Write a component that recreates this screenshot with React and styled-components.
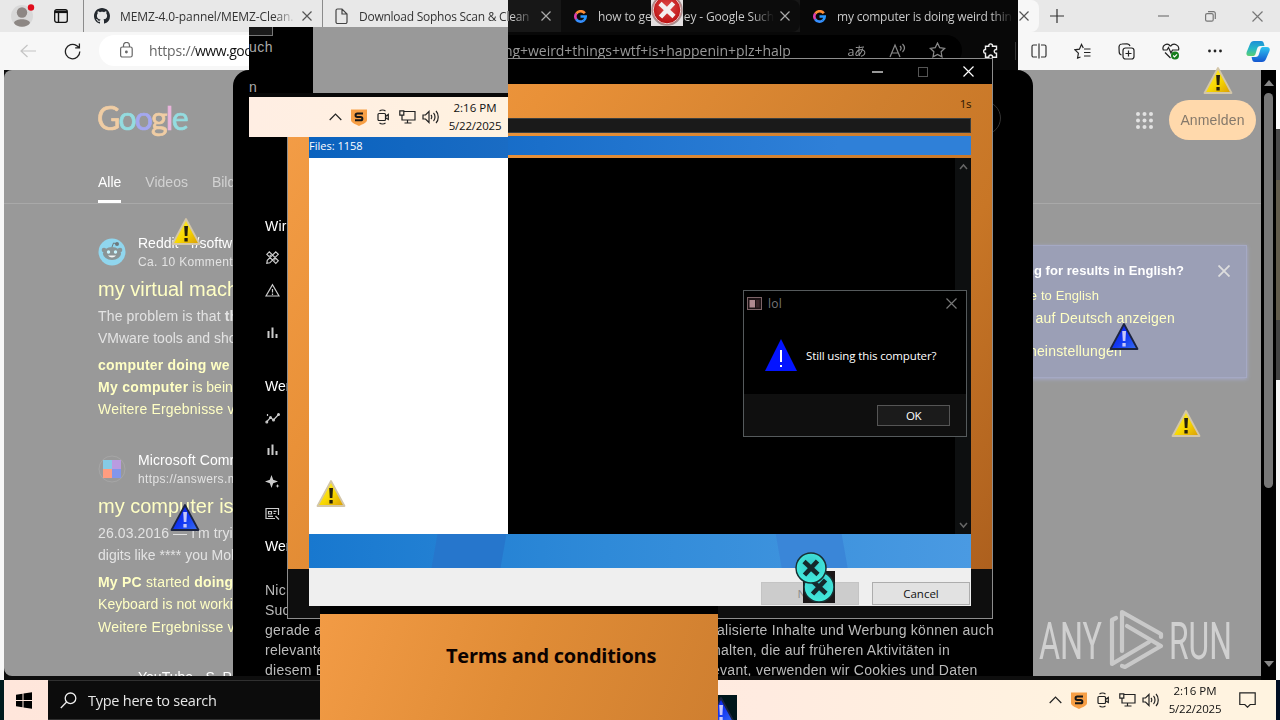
import React from 'react';
import styled, { createGlobalStyle } from 'styled-components';

const Global = createGlobalStyle`
  * { box-sizing: border-box; }
  html, body { margin: 0; padding: 0; background: #000; }
  svg { display: block; flex: none; }
`;

const ui = `"Open Sans", "Noto Sans", "Noto Sans CJK JP", sans-serif`;
const web = `"Liberation Sans", Arial, sans-serif`;

const Desktop = styled.div`
  position: relative;
  width: 1280px;
  height: 720px;
  overflow: hidden;
  background: #f7f7f7;
  font-family: ${ui};
  display: flex;
  flex-direction: column;
`;

/* Anything that floats freely over the desktop */
const Floating = styled.div`
  position: absolute;
  left: ${p => p.$x}px;
  top: ${p => p.$y}px;
  width: ${p => p.$w}px;
  height: ${p => p.$h}px;
`;

const Text = styled.span`
  white-space: pre;
  flex: none;
  font-family: ${p => (p.$web ? web : ui)};
  font-size: ${p => p.$size || 12}px;
  letter-spacing: ${p => p.$ls || 0}px;
  color: ${p => p.$color || '#333'};
  font-weight: ${p => p.$weight || 400};
`;

/* ---------- browser chrome ---------- */
const TabStrip = styled.div`
  display: flex;
  height: 32px;
  flex: none;
  background: #e8e8e8;
`;
const ProfileArea = styled.div`
  width: 83px;
  display: flex;
  align-items: center;
  padding-left: 11px;
  gap: 19px;
`;
const Tab = styled.div`
  width: 239px;
  display: flex;
  align-items: center;
  padding-left: 10px;
  border-left: 1px solid ${p => (p.$tone ? 'transparent' : '#8b8b8b')};
  background: ${p => p.$tone || 'transparent'};
  border-radius: ${p => (p.$tone ? '0 8px 8px 0' : 0)};
`;
const Favicon = styled.div`
  width: 16px;
  display: flex;
  justify-content: center;
`;
const TabTitle = styled.div`
  width: 192px;
  padding-left: 10px;
  overflow: hidden;
  display: flex;
  mask-image: linear-gradient(90deg, #000 164px, transparent 186px);
`;
const WindowButtons = styled.div`
  margin-left: auto;
  display: flex;
  align-items: center;
  gap: 36px;
  padding-right: 17px;
`;
const PlusSlot = styled.div`
  width: 36px;
  display: flex;
  align-items: center;
  justify-content: center;
`;

const Toolbar = styled.div`
  height: 38px;
  flex: none;
  display: flex;
  align-items: center;
  padding-left: 18px;
  background: #f7f7f7;
`;
const AddressBar = styled.div`
  width: 863px;
  height: 31px;
  margin: 0 0 2px 18px;
  border-radius: 16px;
  background: #fff;
  display: flex;
  align-items: center;
  padding-left: 21px;
`;
const Scheme = styled.div`
  display: flex;
  width: 62px;
  padding-left: 16px;
  overflow: visible;
`;
const Host = styled.div`
  width: 309px;
  display: flex;
`;
const AddressActions = styled.div`
  margin-left: auto;
  display: flex;
  align-items: center;
  gap: 23px;
  padding-right: 16px;
`;
const ToolButtons = styled.div`
  margin-left: 21px;
  display: flex;
  align-items: center;
  gap: 27px;
  & > svg:last-child { margin-left: -4px; }
`;
const SplitGroup = styled.div`
  display: flex;
  align-items: center;
  gap: 15px;
  margin-left: -11px;
`;
const ToolGap = styled.div`
  width: 0;
  height: 18px;
  border-left: 1px solid #ccc;
`;

/* ---------- page ---------- */
const PageRow = styled.div`
  height: 610px;
  flex: none;
  display: flex;
  background: #0e0e0e;
  border-left: 4px solid #f7f7f7;
`;
const Page = styled.div`
  width: 1257px;
  height: 606px;
  background: #999;
  border-radius: 8px 0 0 8px;
  overflow: hidden;
  font-family: ${web};
`;
const ScrollTrack = styled.div`
  width: 15px;
  background: #000;
  display: flex;
  flex-direction: column;
  align-items: center;
  justify-content: space-between;
  padding: 10px 0 13px;
`;
const Thumb = styled.div`
  width: 9px;
  height: 395px;
  margin: 7px 0 auto;
  border-radius: 5px;
  background: #777;
`;
const EdgeStrip = styled.div`
  width: 4px;
  background: linear-gradient(#fff 0 59px, #4c4c4c 59px 110px, #625c4c 110px 250px, #444 250px 310px, #f7f7f7 310px);
`;
const PageHeader = styled.div`
  height: 96px;
  display: flex;
  align-items: center;
  padding: 4px 5px 0 93px;
`;
const Logo = styled.div`
  font-family: Lato, sans-serif;
  font-size: 32px;
  line-height: 34px;
  margin-bottom: 5px;
  letter-spacing: -1.8px;
  font-weight: 400;
  -webkit-text-stroke: 0.7px;
`;
const Hue = styled.span`color: ${p => p.$c};`;
const HeaderRight = styled.div`
  margin-left: auto;
  display: flex;
  align-items: center;
  gap: 16px;
`;
const SignIn = styled.div`
  width: 87px;
  height: 40px;
  border-radius: 20px;
  background: #ffd9ac;
  display: flex;
  align-items: center;
  justify-content: center;
`;
const NavRow = styled.div`
  height: 38px;
  display: flex;
  gap: ${p => p.$gap}px;
  padding-left: 94px;
  border-bottom: 1px solid #a9a9a9;
`;
const NavItem = styled.div`
  height: 37px;
  padding-top: 7px;
  line-height: 18px;
  border-bottom: 3px solid ${p => (p.$on ? '#fff' : 'transparent')};
`;
const Results = styled.div`
  padding-left: 94px;
`;
const Source = styled.div`
  display: flex;
  align-items: center;
  gap: 12px;
  height: 38px;
  margin-top: ${p => p.$top}px;
`;
const SourceText = styled.div`
  display: flex;
  flex-direction: column;
`;
const Line = styled.div`
  height: ${p => p.$h}px;
  line-height: ${p => p.$h}px;
  margin-top: ${p => p.$top || 0}px;
  display: flex;
`;

const NoticeBox = styled(Floating)`
  background: #9b9fb6;
  border: 1px solid #a5a9c4;
  box-shadow: 0 1px 4px #a6abd0;
  font-family: ${web};
  padding-top: 12px;
  display: flex;
  flex-direction: column;
`;
const NoticeLine = styled.div`
  width: ${p => p.$w}px;
  height: ${p => p.$h}px;
  line-height: ${p => p.$h}px;
  display: flex;
  justify-content: flex-end;
`;
const NoticeHead = styled.div`
  display: flex;
  align-items: center;
  gap: 34px;
`;

/* ---------- consent dialog ---------- */
const Consent = styled(Floating)`
  background: #000;
  border-radius: 16px 16px 0 0;
  overflow: hidden;
  padding: 146px 0 0 32px;
`;
const ConsentRow = styled.div`
  height: ${p => p.$h}px;
  display: flex;
  align-items: center;
`;
const ConsentSplit = styled.div`
  display: flex;
  height: 20px;
  line-height: 20px;
`;
const ConsentStart = styled.div`
  width: ${p => p.$w}px;
  display: flex;
`;

/* ---------- scanner window ---------- */
const Scanner = styled(Floating)`
  border: 1px solid #8d8d8d;
  background: #0e0e0e;
  display: flex;
  flex-direction: column;
`;
const ScannerTitle = styled.div`
  height: 25px;
  background: #000;
  display: flex;
  align-items: center;
  justify-content: flex-end;
  gap: 35px;
  padding-right: 18px;
`;
const ScannerBody = styled.div`
  height: 485px;
  padding: 0 21px;
  background: linear-gradient(125deg, #f49e48 0%, #e99138 25%, #cf7f2e 58%, #c87626 75%, #ad601e 100%);
`;
const Elapsed = styled.div`
  height: 34px;
  padding-top: 5px;
  display: flex;
  justify-content: flex-end;
  align-items: center;
`;
const Progress = styled.div`
  height: 15px;
  background: #1a1a1a;
  border: 1px solid #3a3f40;
`;
const FilesBar = styled.div`
  height: 19px;
  margin-top: 3px;
  background: linear-gradient(90deg, #0a63c0, #1a6fca 35%, #2f80d8 80%);
`;
const FileList = styled.div`
  height: 376px;
  margin-top: 3px;
  display: flex;
  background: #000;
`;
const BlankArea = styled.div`
  width: 199px;
  background: #fff;
`;
const ListScroll = styled.div`
  margin-left: auto;
  width: 16px;
  background: #0d0f10;
  display: flex;
  flex-direction: column;
  justify-content: space-between;
  align-items: center;
  padding: 5px 0;
`;
const FooterPatch = styled(Floating)`
  display: flex;
  flex-direction: column;
`;
const BlueBand = styled.div`
  height: 34px;
  background:
    linear-gradient(100deg, transparent 126px, #2676cc 127px 194px, transparent 195px),
    linear-gradient(80deg, transparent 465px, #3a86d8 466px 530px, transparent 531px),
    linear-gradient(90deg, #1878cf, #2f8ad8 45%, #4a9ae2);
`;
const ButtonBar = styled.div`
  height: 38px;
  background: #efefef;
  display: flex;
  justify-content: flex-end;
  gap: 13px;
  padding: 14px 1px 0 0;
`;
const WinButton = styled.div`
  width: 98px;
  height: 23px;
  display: flex;
  align-items: center;
  justify-content: center;
  background: ${p => (p.$off ? '#ccc' : '#e2e2e2')};
  border: 1px solid ${p => (p.$off ? '#c4c4c4' : '#adadad')};
`;
const FilesLabel = styled(Floating)`
  background: linear-gradient(90deg, #0a62be, #1a6cc4);
  line-height: 18px;
  display: flex;
`;

/* ---------- message box ---------- */
const MessageBox = styled(Floating)`
  background: #000;
  border: 1px solid #555a5c;
  display: flex;
  flex-direction: column;
`;
const MessageTitle = styled.div`
  height: 24px;
  display: flex;
  align-items: center;
  padding: 0 9px 0 3px;
  gap: 6px;
`;
const MessageContent = styled.div`
  height: 79px;
  display: flex;
  align-items: center;
  gap: 9px;
  padding: 1px 0 0 21px;
`;
const MessageFooter = styled.div`
  flex: 1;
  background: #0f0f0f;
  display: flex;
  justify-content: flex-end;
  padding: 11px 16px 0 0;
`;
const OkButton = styled.div`
  width: 73px;
  height: 21px;
  background: #1b1b1b;
  border: 1px solid #555;
  display: flex;
  align-items: center;
  justify-content: center;
`;
const Push = styled.div`margin-left: auto;`;

/* ---------- taskbar ---------- */
const Taskbar = styled.div`
  height: 40px;
  flex: none;
  display: flex;
  border-left: 4px solid #001a1c;
  border-right: 4px solid #000c22;
  background: linear-gradient(90deg, #ffe6db 0, #ffebe0 60%, #fff3e0 85%, #fff3e0);
`;
const Start = styled.div`
  width: 44px;
  display: flex;
  align-items: center;
  justify-content: center;
  padding-right: 4px;
`;
const Search = styled.div`
  width: 272px;
  background: #0c0c0c;
  border-top: 1px solid #303030;
  border-bottom: 1px solid #303030;
  display: flex;
  align-items: center;
  gap: 11px;
  padding-left: 12px;
`;
const Tray = styled.div`
  height: 40px;
  display: flex;
  align-items: center;
  gap: 4px;
  margin-left: auto;
  padding-right: ${p => p.$pad}px;
`;
const Cell = styled.div`
  width: 20px;
  display: flex;
  justify-content: center;
`;
const Clock = styled.div`
  width: 60px;
  display: flex;
  flex-direction: column;
  align-items: center;
  line-height: 18px;
`;
const NoteCell = styled.div`
  width: 37px;
  display: flex;
  justify-content: center;
`;

/* ---------- screen fragments ---------- */
const Fragment = styled(Floating)`
  overflow: hidden;
  display: flex;
  flex-direction: column;
  background: #080808;
`;
const FragTop = styled.div`
  height: 66px;
  display: flex;
`;
const FragDark = styled.div`
  width: 64px;
  background: #000;
`;
const FragBox = styled.div`
  width: 24px;
  height: 9px;
  background: #1a1a1a;
  border: solid #777;
  border-width: 0 1px 1px 0;
`;
const FragGray = styled.div`
  flex: 1;
  background: #999;
`;
const FragTray = styled.div`
  height: 40px;
  margin-top: 4px;
  background: linear-gradient(90deg, #ffeee3, #fff2e0);
  display: flex;
`;
const TermsEdge = styled(Floating)`
  background: #000;
`;
const Terms = styled(Floating)`
  background: linear-gradient(110deg, #f29b45 0%, #e08c36 50%, #cf7f30 100%);
  display: flex;
  padding: 28px 0 0 126px;
  line-height: 28px;
`;
const Inverter = styled(Floating)`
  background: #fff;
  mix-blend-mode: difference;
`;
const Square = styled(Floating)`
  background: ${p => p.$c};
  overflow: hidden;
`;
const Shift = styled.div`
  margin: ${p => p.$top || 0}px 0 0 ${p => p.$left || 0}px;
`;

/* ---------- icons ---------- */
const Svg = ({ w, h, vb, children, c = '#333', sw = 1.2, ...r }) => (
  <svg width={w} height={h || w} viewBox={vb || `0 0 ${w} ${h || w}`} fill="none" stroke={c} strokeWidth={sw} {...r}>{children}</svg>
);
const Cross = ({ s = 9, c = '#555', sw = 1.2 }) => (
  <Svg w={s} c={c} sw={sw}><path d={`M.5 .5 L${s - 0.5} ${s - 0.5} M${s - 0.5} .5 L.5 ${s - 0.5}`} /></Svg>
);
const Avatar = () => (
  <Svg w={24} h={24} sw={0}>
    <circle cx="11" cy="12" r="11" fill="#d8d8d8" />
    <circle cx="11" cy="8.500" r="5.200" fill="#8d8784" />
    <path d="M3 19c1-5 15-5 16 0-3 5-13 5-16 0z" fill="#8d8784" />
    <circle cx="20" cy="3.500" r="3.200" fill="#e00d1c" />
  </Svg>
);
const Workspaces = () => (
  <Svg w={14} h={14} c="#111" sw={1.3}><rect x=".7" y=".7" width="12.600" height="12.600" rx="2" /><path d="M1 2.800h12" strokeWidth="2.600" /><path d="M4.500 4v9" strokeWidth="1.400" /></Svg>
);
const Github = () => (
  <Svg w={16} vb="0 0 16 16" sw={0}><path fill="#24292f" d="M8 0C3.580 0 0 3.580 0 8c0 3.540 2.290 6.530 5.470 7.590.4.070.55-.17.55-.38 0-.19-.01-.82-.01-1.490-2.010.37-2.530-.49-2.690-.94-.09-.23-.48-.94-.82-1.130-.28-.15-.68-.52-.01-.53.63-.01 1.080.58 1.230.82.72 1.210 1.870.87 2.330.66.070-.52.28-.87.51-1.070-1.780-.2-3.640-.89-3.640-3.950 0-.87.31-1.590.82-2.150-.08-.2-.36-1.020.08-2.120 0 0 .67-.21 2.200.82.64-.18 1.320-.27 2-.27s1.360.090 2 .27c1.530-1.040 2.200-.82 2.200-.82.44 1.100.16 1.920.08 2.120.51.56.82 1.270.82 2.150 0 3.070-1.870 3.750-3.650 3.950.29.25.54.73.54 1.480 0 1.070-.01 1.930-.01 2.200 0 .21.15.46.55.38A8.010 8.010 0 0 0 16 8c0-4.420-3.580-8-8-8z" /></Svg>
);
const PageIcon = () => (
  <Svg w={13} h={16} c="#444"><path d="M1 2.500a1.500 1.500 0 0 1 1.500-1.500H7l5 5v8a1.500 1.500 0 0 1-1.500 1.500h-8A1.500 1.500 0 0 1 1 14zM7 1v5h5" /></Svg>
);
const GMark = () => (
  <Svg w={13} h={13} sw={2.600}>
    <path d="M10.800 3.200A5.200 5.200 0 0 0 2.300 3.600" stroke="#0072c8" />
    <path d="M2.300 3.600A5.200 5.200 0 0 0 2.200 9.300" stroke="#20c050" />
    <path d="M2.200 9.300A5.200 5.200 0 0 0 9.800 10.500" stroke="#c87000" />
    <path d="M9.800 10.500A5.200 5.200 0 0 0 11.700 6.500H6.500" stroke="#d86800" />
  </Svg>
);
const Lock = () => (
  <Svg w={13} h={16} c="#666"><rect x=".6" y="5" width="11.600" height="10" rx="1.800" /><path d="M3.500 5V3.400a3 3 0 0 1 6 0V5" /><circle cx="6.400" cy="10" r=".8" fill="#666" /></Svg>
);
const Refresh = () => (
  <Svg w={17} c="#222" sw={1.300}><path d="M15.800 8.500A7.200 7.200 0 1 1 12.600 2.600L15 4.600M15.400 .6v4.200h-4.200" /></Svg>
);
const Star = ({ lines }) => (
  <Svg w={17} h={16} c={lines ? '#222' : '#777'}>
    {lines
      ? <path d="M6.500 14L3.600 15l.8-4.800L1 6.800l4.400-.6L7.500 1.500l1.800 3.600M10 6h6.500M10 9.500h6.500M10 13h6.500" />
      : <path d="M8.500 1l2.200 4.600 5 .7-3.600 3.500.9 5-4.500-2.400L4 14.800l.9-5L1.300 6.300l5-.7z" />}
  </Svg>
);
const Puzzle = () => (
  <Svg w={16} h={16} c="#111" sw={1.400}><path d="M2.500 3.300h3.300c-.5-3.300 4.200-3.300 3.700 0h4v3.200c-3-.3-3 4 0 3.700v4h-4c.4-3-4-3-3.700 0H2.500v-4c-2.500.2-2.500-3.900 0-3.700z" /></Svg>
);
const Split = () => (
  <Svg w={16} h={16}><path d="M6 2H2.500A1.500 1.500 0 0 0 1 3.500v9A1.500 1.500 0 0 0 2.500 14H6M8 .5v15M10 2h3.500A1.500 1.500 0 0 1 15 3.500v9a1.500 1.500 0 0 1-1.500 1.500H10" /></Svg>
);
const Collections = () => (
  <Svg w={17} h={17} c="#222"><rect x="5" y="5" width="11" height="11" rx="2.500" /><path d="M10.500 7.500v6M7.500 10.500h6M3.500 12A3 3 0 0 1 1.200 9L1 4A3 3 0 0 1 4 1l5-.2A3 3 0 0 1 12 3" /></Svg>
);
const Health = () => (
  <Svg w={18} h={17} c="#222"><path d="M8.500 3.300C5.500-.8-.5 2 1.300 7H5l1.500-2.500L9 10l1.500-3h6C18 2 11.500-.8 8.500 3.300M3 9.500l5.500 5.500" /><circle cx="13" cy="12.500" r="4" fill="#167d1c" stroke="none" /><path d="M11.200 12.500l1.300 1.300 2.500-2.500" stroke="#fff" /></Svg>
);
const Dots = () => <Svg w={16} h={4} sw={0}><g fill="#222"><circle cx="2.500" cy="2" r="1.400" /><circle cx="8" cy="2" r="1.400" /><circle cx="13.500" cy="2" r="1.400" /></g></Svg>;
const Copilot = () => (
  <Svg w={24} h={23} sw={0}>
    <defs>
      <linearGradient id="cpa" x2="0" y2="1"><stop stopColor="#1d8fd8" /><stop offset=".5" stopColor="#25b6c8" /><stop offset="1" stopColor="#5ccf70" /></linearGradient>
      <linearGradient id="cpb" x2="0" y2="1"><stop stopColor="#2fc4f0" /><stop offset="1" stopColor="#1456d0" /></linearGradient>
    </defs>
    <path d="M8 1h7c2 0 2.500 1 3 3l.5 2h-4c-2 0-3 1-3.500 3l-1.500 5c-.5 1.500-1.300 2-3 2H3c-2.500 0-3-2-2.300-4L4 4c.8-2 2-3 4-3z" fill="url(#cpa)" />
    <path d="M16 22H9c-2 0-2.500-1-3-3l-.4-2h3.900c2 0 3-1 3.500-3l1.500-5c.5-1.500 1.300-2 3-2H21c2.500 0 3.200 2 2.500 4L20 19c-.8 2-2 3-4 3z" fill="url(#cpb)" />
  </Svg>
);
const Reddit = () => (
  <Svg w={28} sw={0}>
    <circle cx="14" cy="14" r="13.500" fill="#90d6ee" />
    <ellipse cx="14" cy="15.500" rx="9" ry="6.500" fill="#8a9496" /><circle cx="6" cy="12" r="2.300" fill="#8a9496" /><circle cx="22" cy="12" r="2.300" fill="#8a9496" />
    <path d="M14 9l1.500-4 4 1" stroke="#6d787c" strokeWidth="1" />
    <circle cx="19" cy="6" r="2" fill="#6d787c" />
    <circle cx="10.500" cy="14" r="1.700" fill="#c8f4ff" /><circle cx="17.500" cy="14" r="1.700" fill="#c8f4ff" />
    <path d="M10 17.500c2 2.500 6 2.500 8 0z" fill="#f4f4f4" />
  </Svg>
);
const MsMark = () => (
  <Svg w={28} sw={0}>
    <circle cx="14" cy="14" r="13" stroke="#a6a6a6" strokeWidth="1" />
    <rect x="5" y="5" width="9" height="9" fill="#86cbe6" /><rect x="14" y="5" width="9" height="9" fill="#b99be0" />
    <rect x="5" y="14" width="9" height="9" fill="#ff9d80" /><rect x="14" y="14" width="9" height="9" fill="#8296ea" />
  </Svg>
);
const Grid9 = () => (
  <Svg w={17} h={17} sw={0}><g fill="#e2e2e2">{[2, 8.5, 15].map(y => [2, 8.5, 15].map(x => <circle key={x + '-' + y} cx={x} cy={y} r="2" />))}</g></Svg>
);
const Magnifier = () => <Svg w={17} h={17} c="#eee" sw={1.300}><circle cx="10.500" cy="6.300" r="5.300" /><path d="M6.600 10L.8 16" /></Svg>;
const WinLogo = () => <Svg w={16} h={17} sw={0}><path fill="#000" d="M0 2.800L6.500 1.800V8H0zM7.500 1.600L16 .3V8H7.500zM0 9h6.500v6.200L0 14.200zM7.500 9H16v7.700l-8.500-1.300z" /></Svg>;
const Up = () => <Svg w={13} h={8} c="#222"><path d="M.7 7L6.500 1.200 12.300 7" /></Svg>;
const Shield = () => (
  <Svg w={16} h={17} sw={0}><path d="M0 .5h16V11c0 2.500-4 4-8 6-4-2-8-3.500-8-6z" fill="#f79f45" /><path d="M12 4.500H6.300a1.700 1.700 0 0 0 0 3.500h3.400a1.600 1.600 0 0 1 0 3.300H4" stroke="#171717" strokeWidth="2" /></Svg>
);
const Cam = () => <Svg w={12} h={16} c="#222"><rect x="1" y="4.500" width="7.500" height="7" rx="1" /><path d="M8.500 7.500L11.300 5.500v5L8.500 8.800M2.500 2.200C4 .6 7 .6 8.500 2.200M2.500 13.800c1.500 1.600 4.500 1.600 6 0" /></Svg>;
const Net = () => <Svg w={17} h={14} c="#222"><path d="M5 1.500h11v8.500H3V6M8.500 10v3M5.500 13h7M.8.8h4v4.400h-4zM3 5v2" /></Svg>;
const Vol = () => <Svg w={18} h={14} c="#222"><path d="M1 5h2.500L7 1.500v11L3.500 9H1zM9 5c1 1 1 3 0 4M11.500 3c2 2 2 6 0 8M14 1c3 3 3 9 0 12" /></Svg>;
const Note = () => <Svg w={17} h={16} c="#222"><path d="M.8.8h15.400v11.700h-5L8.500 15.200 5.800 12.500h-5z" /></Svg>;

const ICONS = {
  tools: <path d="M1.800 4.300l2.500-2.500 9 9-2.500 2.500zM10.800 1.800l2.500 2.500-8.500 8.500-3 .5.500-3zM4.800 5.800l1-1M9.300 10.300l1-1" />,
  warn: <path d="M7.500 1.800L14 13H1zM7.500 6v3.500M7.500 10.500v1.500" />,
  bars: <path d="M3.500 6v7M7.500 2.500v10.500M11.500 9v4" strokeWidth="2" />,
  trend: <><path d="M1.500 12l4-4.500 3 2.500L14 4" /><circle cx="1.800" cy="12" r=".9" /><circle cx="5.500" cy="7.500" r=".9" /><circle cx="8.500" cy="10" r=".9" /><circle cx="13.500" cy="4.500" r=".9" /><path d="M2.500 4v2" /></>,
  spark: <path d="M6.500 1L8.200 5.800l4.800 1.700-4.800 1.700-1.700 4.800-1.700-4.800L0 7.500l4.800-1.700zM12.500 10l.6 1.400 1.400.6-1.400.6-.6 1.400-.6-1.400-1.400-.6 1.400-.6z" fill="#ccc" stroke="none" />,
  card: <path d="M10 12.500H1v-10h12.500V9M3.500 5.500h3v2.500h-3zM8.500 5.300h3M8.500 7.500h2M3 10.300h5M10.500 10l3.500 3.500" />,
};
const Glyph = ({ n }) => <Svg w={15} c="#ccc">{ICONS[n]}</Svg>;

const Warning = ({ blue }) => {
  const id = blue ? 'wb' : 'wy';
  return (
    <Svg w={32} h={32} sw={0}>
      <defs><linearGradient id={id} x2="1" y2="1"><stop stopColor={blue ? '#0a18d8' : '#fff04a'} /><stop offset=".55" stopColor={blue ? '#1238f4' : '#f8d800'} /><stop offset="1" stopColor={blue ? '#3a70f0' : '#d89a08'} /></linearGradient></defs>
      <path d="M16 3L29.500 28H2.500z" fill={`url(#${id})`} stroke={blue ? '#1c2440' : '#d3c6a8'} strokeWidth="1.800" strokeLinejoin="round" />
      <path d="M14.200 10h3.800l-.6 10h-2.600zM14.400 22h3.300v3.500h-3.300z" fill={blue ? '#c8c8fa' : '#26200c'} />
    </Svg>
  );
};
const ErrorBall = ({ cyan }) => (
  <Svg w={32} sw={0}>
    <defs><radialGradient id={cyan ? 'ec' : 'er'} cx=".5" cy=".4" r=".6"><stop stopColor={cyan ? '#35c8cc' : '#e04a48'} /><stop offset="1" stopColor={cyan ? '#44ecdc' : '#b80c0e'} /></radialGradient></defs>
    <circle cx="16" cy="16" r="15" fill={`url(#${cyan ? 'ec' : 'er'})`} stroke={cyan ? '#183033' : '#a89090'} strokeWidth="1.500" />
    {!cyan && <circle cx="16" cy="16" r="13.800" stroke="#e8d8d8" strokeWidth="1" />}
    <path d="M9 9.500l14 13M22.500 9l-13 14" stroke={cyan ? '#15282c' : '#f4efef'} strokeWidth="4.600" />
  </Svg>
);

const AnyRun = () => (
  <svg width="196" height="66" viewBox="0 0 196 66" fill="none" opacity=".85">
    <g fill="#dadada" fontFamily="Roboto, sans-serif" fontWeight="400" fontSize="51">
      <text x="0" y="51" textLength="63" lengthAdjust="spacingAndGlyphs">ANY</text>
      <text x="130" y="51" textLength="63" lengthAdjust="spacingAndGlyphs">RUN</text>
    </g>
    <g stroke="#d2d2d2" strokeWidth="4.200" strokeLinejoin="round" strokeLinecap="round">
      <path d="M77 10L73 12V56L110 34" />
      <path d="M83 43V4L122 26V29" />
      <path d="M88 18L122 38 86 59 83 58" />
    </g>
  </svg>
);

const TrayIcons = ({ pad, note }) => (
  <Tray $pad={pad}>
    <Cell><Up /></Cell><Cell><Shield /></Cell><Cell><Cam /></Cell><Cell><Net /></Cell><Cell><Vol /></Cell>
    <Clock>
      <Text $size={11.5} $ls={0} $color="#111" $weight={500}>2:16 PM</Text>
      <Text $size={11.5} $ls={-0.2} $color="#111" $weight={500}>5/22/2025</Text>
    </Clock>
    {note && <NoteCell><Note /></NoteCell>}
  </Tray>
);

const tabs = [
  { icon: <Github />, title: 'MEMZ-4.0-pannel/MEMZ-Clean.', ls: -0.1 },
  { icon: <PageIcon />, title: 'Download Sophos Scan & Clean', ls: -0.25 },
  { icon: <GMark />, title: 'how to get money - Google Such', tone: '#f3f3f3', ls: -0.15 },
  { icon: <GMark />, title: 'my computer is doing weird thin', tone: '#f7f7f7', ls: -0.2 },
];

const pale = '#ffffc4';
const dim = '#e3e3e3';

const W = ({ children, s = 14, ls, c = dim, b }) => (
  <Text $web $size={s} $ls={ls ?? (b ? 0.2 : 0)} $color={c} $weight={b ? 700 : 400}>{children}</Text>
);

const DESKTOP_WARNINGS = [
  [1202, 65, false], [170, 216, false], [315, 478, false], [1170, 408, false],
  [169, 502, true], [1108, 321, true],
];

export default function App() {
  return (
    <Desktop>
      <Global />
      <TabStrip>
        <ProfileArea><Avatar /><Workspaces /></ProfileArea>
        {tabs.map(t => (
          <Tab key={t.title} $tone={t.tone}>
            <Favicon>{t.icon}</Favicon>
            <TabTitle><Text $size={12} $ls={t.ls}>{t.title}</Text></TabTitle>
            <Cross s={10} />
          </Tab>
        ))}
        <PlusSlot><Svg w={14} c="#333"><path d="M7 0v14M0 7h14" /></Svg></PlusSlot>
        <WindowButtons>
          <Svg w={11} h={2} c="#777"><path d="M0 1h11" /></Svg>
          <Svg w={11} c="#777"><rect x=".6" y="2.600" width="7.600" height="7.600" rx="1.500" /><path d="M3 .6h5.500a1.800 1.800 0 0 1 1.800 1.800V8" /></Svg>
          <Cross s={11} c="#777" />
        </WindowButtons>
      </TabStrip>
      <Toolbar>
        <Svg w={46} h={16} c="#c4c4c4" vb="-2 0 46 16"><path d="M16 8H1M7.500 2L1 8l6.500 6" /></Svg>
        <Refresh />
        <AddressBar>
          <Lock />
          <Scheme><Text $size={14} $ls={-0.15} $color="#666">https://</Text></Scheme>
          <Host><Text $size={14} $ls={-0.5} $color="#111">www.goo</Text></Host>
          <Text $size={14} $ls={-0.05} $color="#666">ng+weird+things+wtf+is+happenin+plz+halp</Text>
          <AddressActions>
            <Text $size={12.5} $color="#666" $ls={-0.5}>aあ</Text>
            <Svg w={17} h={15} c="#777"><path d="M1 14L6 2l5 12M3 10h6M11 3c1.500 1.500 1.500 3 0 4.500M13.500 1c2.500 2.500 2.500 5.500 0 8" /></Svg>
            <Star />
          </AddressActions>
        </AddressBar>
        <ToolButtons>
          <Puzzle /><SplitGroup><ToolGap /><Split /></SplitGroup><Star lines /><Collections /><Health /><Dots /><Copilot />
        </ToolButtons>
      </Toolbar>

      <PageRow>
        <Page>
          <PageHeader>
            <Logo>
              <Hue $c="#f0cda4">G</Hue><Hue $c="#94dce0">o</Hue><Hue $c="#a4a8f0">o</Hue><Hue $c="#f0cda4">g</Hue><Hue $c="#eab4dc">l</Hue><Hue $c="#94dce0">e</Hue>
            </Logo>
            <HeaderRight><Grid9 /><SignIn><W s={14} ls={0.15} c="#85796b">Anmelden</W></SignIn></HeaderRight>
          </PageHeader>
          <NavRow $gap={24}>
            <NavItem $on><W c="#fff">Alle</W></NavItem>
            <NavItem><W c="#d2d2d2">Videos</W></NavItem>
            <NavItem><W c="#d2d2d2">Bild</W></NavItem>
          </NavRow>
          <Results>
            <Source $top={29}>
              <Reddit />
              <SourceText>
                <Line $h={20}><W c="#fff">Reddit · r/softw</W></Line>
                <Line $h={18}><W s={12} ls={0.35}>Ca. 10 Kommenta</W></Line>
              </SourceText>
            </Source>
            <Line $h={28} $top={4}><W s={20} c={pale}>my virtual mach</W></Line>
            <Line $h={22} $top={2}><W ls={0.15}>The problem is that </W><W b>th</W></Line>
            <Line $h={22}><W>VMware tools and sho</W></Line>
            <Line $h={22} $top={5}><W c={pale} b>computer doing we</W></Line>
            <Line $h={22}><W c={pale} b ls={0.3}>My computer</W><W c={pale}> is bein</W></Line>
            <Line $h={22}><W c={pale} ls={0.2}>Weitere Ergebnisse v</W></Line>
            <Source $top={30}>
              <MsMark />
              <SourceText>
                <Line $h={20}><W c="#fff" ls={0.1}>Microsoft Comr</W></Line>
                <Line $h={18}><W s={12} ls={0.35}>https://answers.m</W></Line>
              </SourceText>
            </Source>
            <Line $h={28} $top={4}><W s={20} c={pale}>my computer is</W></Line>
            <Line $h={22} $top={2}><W ls={0.1}>26.03.2016 — I'm tryi</W></Line>
            <Line $h={22}><W>digits like **** you Mob</W></Line>
            <Line $h={22} $top={5}><W c={pale} b>My PC</W><W c={pale} ls={0.2}> started </W><W c={pale} b>doing</W></Line>
            <Line $h={22}><W c={pale} ls={0.05}>Keyboard is not worki</W></Line>
            <Line $h={22} $top={1}><W c={pale} ls={0.2}>Weitere Ergebnisse v</W></Line>
            <Source $top={29}>
              <Svg w={28} sw={0}><circle cx="14" cy="20" r="13" fill="#a2a2a2" /></Svg>
              <SourceText><Line $h={20}><W c="#fff">YouTube · S. P</W></Line><Line $h={18} /></SourceText>
            </Source>
          </Results>
        </Page>
        <ScrollTrack>
          <Svg w={10} h={6} sw={0}><path d="M0 6L5 0l5 6z" fill="#888" /></Svg>
          <Thumb />
          <Svg w={10} h={6} sw={0}><path d="M0 0h10L5 6z" fill="#888" /></Svg>
        </ScrollTrack>
        <EdgeStrip />
      </PageRow>

      <Taskbar>
        <Start><WinLogo /></Start>
        <Search><Magnifier /><Text $size={14.5} $ls={-0.25} $color="#e6e6e6">Type here to search</Text></Search>
        <TrayIcons pad={10} note />
      </Taskbar>

      <NoticeBox $x={1000} $y={245} $w={247} $h={133}>
        <NoticeHead>
          <NoticeLine $w={183} $h={25}><W s={13} ls={0.05} b c="#fff">ng for results in English?</W></NoticeLine>
          <Cross s={12} c="#ddd" sw={1.8} />
        </NoticeHead>
        <NoticeLine $w={98} $h={25}><W s={13} ls={0.1} c={pale}>e to English</W></NoticeLine>
        <NoticeLine $w={174} $h={21}><W ls={0.2} c={pale}>r auf Deutsch anzeigen</W></NoticeLine>
        <NoticeLine $w={121} $h={44}><W ls={0.2} c={pale}>heinstellungen</W></NoticeLine>
      </NoticeBox>

      <Consent $x={233} $y={70} $w={800} $h={606}>
        <ConsentRow $h={20}><W c="#fff" ls={0.2}>Wir</W></ConsentRow>
        <ConsentRow $h={43}><Glyph n="tools" /></ConsentRow>
        <ConsentRow $h={22}><Glyph n="warn" /></ConsentRow>
        <ConsentRow $h={62}><Glyph n="bars" /></ConsentRow>
        <ConsentRow $h={45}><W c="#fff" ls={0}>Wer</W></ConsentRow>
        <ConsentRow $h={19}><Glyph n="trend" /></ConsentRow>
        <ConsentRow $h={44}><Glyph n="bars" /></ConsentRow>
        <ConsentRow $h={20}><Glyph n="spark" /></ConsentRow>
        <ConsentRow $h={45}><Glyph n="card" /></ConsentRow>
        <ConsentRow $h={20}><W c="#fff" ls={0}>Wer</W></ConsentRow>
        <ConsentRow $h={24} />
        {[
          ['Nich', 455, ''], ['Suc', 455, ''],
          ['gerade a', 452, 'alisierte Inhalte und Werbung können auch'],
          ['relevante', 448, 'halten, die auf früheren Aktivitäten in'],
          ['diesem E', 447, 'evant, verwenden wir Cookies und Daten'],
        ].map(([a, w, b]) => (
          <ConsentSplit key={a}>
            <ConsentStart $w={w}><W ls={0.25} c="#bbb">{a}</W></ConsentStart>
            <W ls={0.27} c="#bbb">{b}</W>
          </ConsentSplit>
        ))}
      </Consent>
      <Floating $x={967} $y={101} $w={34} $h={34}><Svg w={34} c="#333" sw={1}><circle cx="17" cy="17" r="16.500" /></Svg></Floating>

      <Inverter $x={508} $y={0} $w={510} $h={70} />

      <Scanner $x={287} $y={58} $w={706} $h={561}>
        <ScannerTitle>
          <Svg w={11} h={2} c="#fff"><path d="M0 1h11" /></Svg>
          <Svg w={10} c="#555"><rect x=".5" y=".5" width="9" height="9" strokeWidth="1" /></Svg>
          <Cross s={11} c="#fff" />
        </ScannerTitle>
        <ScannerBody>
          <Elapsed><Text $size={11.5} $ls={-0.4} $color="#2a1400">1s</Text></Elapsed>
          <Progress />
          <FilesBar />
          <FileList>
            <BlankArea />
            <ListScroll>
              <Svg w={9} h={7} c="#666" sw={1.500}><path d="M1 6l3.500-4L8 6" /></Svg>
              <Svg w={9} h={7} c="#666" sw={1.500}><path d="M1 1l3.500 4L8 1" /></Svg>
            </ListScroll>
          </FileList>
        </ScannerBody>
      </Scanner>
      <FilesLabel $x={309} $y={137} $w={199} $h={21}><Text $size={11} $color="#fff">Files: 1158</Text></FilesLabel>

      <FooterPatch $x={309} $y={534} $w={662} $h={72}>
        <BlueBand />
        <ButtonBar>
          <WinButton $off><Text $size={11.5} $color="#8a8a8a">Next</Text></WinButton>
          <WinButton><Text $size={11.5} $color="#111">Cancel</Text></WinButton>
        </ButtonBar>
      </FooterPatch>

      <MessageBox $x={743} $y={290} $w={224} $h={147}>
        <MessageTitle>
          <Svg w={15} h={13} sw={0}><rect x=".5" y=".5" width="14" height="12" fill="#1c1214" stroke="#7d6468" strokeWidth="1" /><rect x="2.500" y="3" width="5.500" height="7.500" fill="#b08a90" /><rect x="9" y="3" width="3.500" height="7.500" fill="#3a2428" /></Svg>
          <Text $size={12} $color="#777" $ls={0.2}>lol</Text>
          <Push><Cross s={11} c="#777" /></Push>
        </MessageTitle>
        <MessageContent>
          <Svg w={32} h={32} sw={0}><path d="M16 0l16 32H0z" fill="#0414ff" /><path d="M15 11h2v12h-2zM15 26h2v2h-2z" fill="#fff" /></Svg>
          <Text $size={11.5} $color="#fff" $ls={-0.13}>Still using this computer?</Text>
        </MessageContent>
        <MessageFooter><OkButton><Text $size={11.500} $color="#fff" $ls={-0.5}>OK</Text></OkButton></MessageFooter>
      </MessageBox>

      <TermsEdge $x={320} $y={606} $w={398} $h={8} />
      <Terms $x={320} $y={614} $w={398} $h={106}>
        <Text $size={20} $weight={700} $ls={-0.25} $color="#0c0200">Terms and conditions</Text>
      </Terms>

      <Fragment $x={249} $y={27} $w={259} $h={110}>
        <FragTop>
          <FragDark>
            <FragBox />
            <Line $h={22}><W ls={0.5} c="#aaa">uch</W></Line>
            <Line $h={22} $top={18}><W ls={0.5} c="#aaa">n</W></Line>
          </FragDark>
          <FragGray />
        </FragTop>
        <FragTray><TrayIcons pad={3} /></FragTray>
      </Fragment>

      <Square $x={651} $y={0} $w={32} $h={26} $c="#e4dfe0"><Shift $top={-6}><ErrorBall /></Shift></Square>
      <Square $x={803} $y={571} $w={32} $h={32} $c="#1b1718"><ErrorBall cyan /></Square>
      <Floating $x={795} $y={552} $w={32} $h={32}><ErrorBall cyan /></Floating>
      <Square $x={718} $y={695} $w={19} $h={25} $c="#00161a"><Shift $left={-13}><Warning blue /></Shift></Square>
      {DESKTOP_WARNINGS.map(([x, y, blue]) => (
        <Floating key={`${x}-${y}`} $x={x} $y={y} $w={32} $h={32}><Warning blue={blue} /></Floating>
      ))}
      <Floating $x={1039} $y={608} $w={196} $h={66}><AnyRun /></Floating>
    </Desktop>
  );
}
